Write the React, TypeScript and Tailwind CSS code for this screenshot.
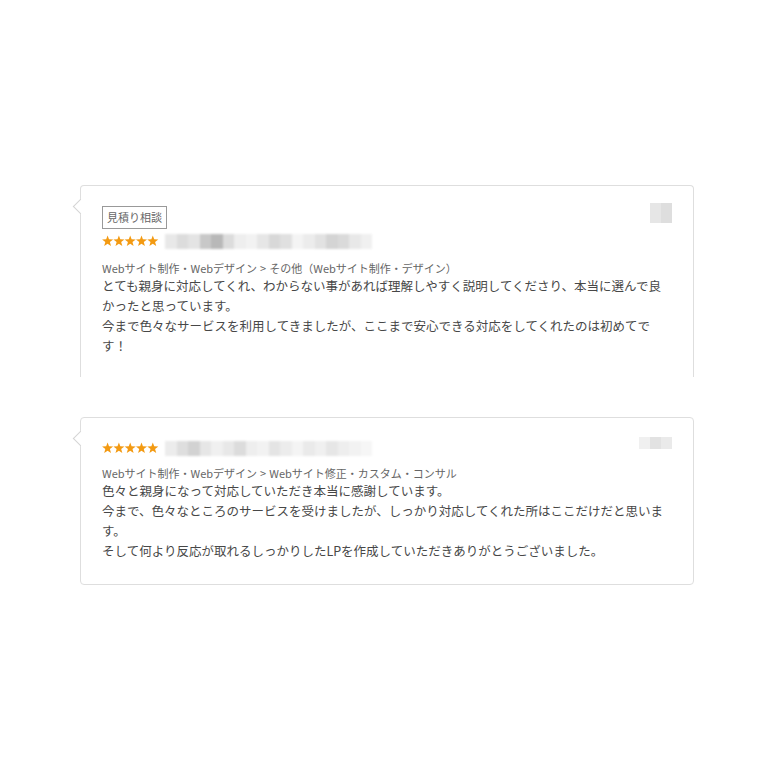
import React from 'react';

const font = { fontFamily: '"Noto Sans CJK JP", "Noto Sans", sans-serif' };

const Stars: React.FC = () => (
  <svg width="57" height="12" viewBox="0 0 57 12" className="shrink-0">
    {[0, 1, 2, 3, 4].map((i) => {
      const cx = 5.6 + i * 11.3;
      const pts: string[] = [];
      for (let k = 0; k < 10; k++) {
        const r = k % 2 === 0 ? 5.8 : 2.4;
        const a = (Math.PI / 5) * k - Math.PI / 2;
        pts.push(`${(cx + r * Math.cos(a)).toFixed(2)},${(6.3 + r * Math.sin(a)).toFixed(2)}`);
      }
      return <polygon key={i} points={pts.join(' ')} fill="#f39a12" />;
    })}
  </svg>
);

// pixelated, blurred name placeholder
const Blur: React.FC<{ cells: string[]; w: number }> = ({ cells, w }) => (
  <div className="flex h-[15px] blur-[1px]">
    {cells.map((c, i) => (
      <div key={i} className="h-full" style={{ width: w, background: c }} />
    ))}
  </div>
);

interface Review {
  badge?: string;
  category: [string, string];
  body: string[];
  nameCells: string[];
  cornerCells: string[];
  open?: boolean;
}

const reviews: Review[] = [
  {
    badge: '見積り相談',
    category: ['Webサイト制作・Webデザイン', 'その他（Webサイト制作・デザイン）'],
    body: [
      'とても親身に対応してくれ、わからない事があれば理解しやすく説明してくださり、本当に選んで良かったと思っています。',
      '今まで色々なサービスを利用してきましたが、ここまで安心できる対応をしてくれたのは初めてです！',
    ],
    nameCells: [
      '#e8e8e8', '#dcdcdc', '#e4e4e4', '#c8c8c8', '#b8b8b8', '#dcdcdc', '#eeeeee', '#f2f2f2',
      '#e6e6e6', '#d8d8d8', '#e0e0e0', '#f4f4f4', '#ececec', '#e2e2e2', '#d4d4d4', '#dadada',
      '#e8e8e8', '#f0f0f0',
    ],
    cornerCells: ['#e6e6e6', '#dedede'],
    open: true,
  },
  {
    category: ['Webサイト制作・Webデザイン', 'Webサイト修正・カスタム・コンサル'],
    body: [
      '色々と親身になって対応していただき本当に感謝しています。',
      '今まで、色々なところのサービスを受けましたが、しっかり対応してくれた所はここだけだと思います。',
      'そして何より反応が取れるしっかりしたLPを作成していただきありがとうございました。',
    ],
    nameCells: [
      '#ececec', '#dedede', '#d2d2d2', '#e6e6e6', '#f0f0f0', '#e8e8e8', '#dcdcdc', '#eeeeee',
      '#f2f2f2', '#e4e4e4', '#ececec', '#f4f4f4', '#eaeaea', '#f0f0f0', '#e6e6e6', '#eeeeee',
      '#f2f2f2', '#f6f6f6',
    ],
    cornerCells: ['#f0f0f0', '#e2e2e2', '#eaeaea'],
  },
];

const ReviewCard: React.FC<{ r: Review }> = ({ r }) => (
  <div
    className={
      'relative w-[614px] bg-white border border-[#dedede] pl-[21px] pr-[21px] ' +
      (r.open ? 'border-b-0 rounded-t pt-[20px] pb-[21px]' : 'rounded pt-[21px] pb-[23px]')
    }
  >
    <div className="absolute left-[-6px] top-[15px] w-[11px] h-[11px] rotate-45 bg-white border-l border-b border-[#d4d4d4]" />
    <div className={'absolute right-[21px] ' + (r.open ? 'top-[17px]' : 'top-[19px]')}>
      <div className="flex blur-[0.6px]">
        {r.cornerCells.map((c, i) => (
          <div key={i} className={'w-[11px] ' + (r.open ? 'h-[20px]' : 'h-[12px]')} style={{ background: c }} />
        ))}
      </div>
    </div>
    {r.badge && (
      <div className="flex">
        <div className="border border-[#999999] px-[4px] h-[23px] flex items-center text-[11px] text-[#666666] leading-none">
          {r.badge}
        </div>
      </div>
    )}
    <div className={'flex items-center gap-[6px] h-[18px] ' + (r.badge ? 'mt-[3px]' : '')}>
      <Stars />
      <Blur cells={r.nameCells} w={11.5} />
    </div>
    <div className={'text-[11px] leading-[16px] text-[#666666] ' + (r.badge ? 'mt-[10px]' : 'mt-[8px]')}>
      {r.category[0]}
      <span className="mx-[3px]">&gt;</span>
      {r.category[1]}
    </div>
    <div className="text-[12.5px] leading-[20px] text-[#474747]">
      {r.body.map((l, i) => (
        <p key={i}>{l}</p>
      ))}
    </div>
  </div>
);

export default function App() {
  return (
    <div className="w-[768px] h-[768px] bg-white overflow-hidden" style={font}>
      <div className="pt-[185px] pl-[80px] flex flex-col gap-[40px]">
        {reviews.map((r, i) => (
          <ReviewCard key={i} r={r} />
        ))}
      </div>
    </div>
  );
}
